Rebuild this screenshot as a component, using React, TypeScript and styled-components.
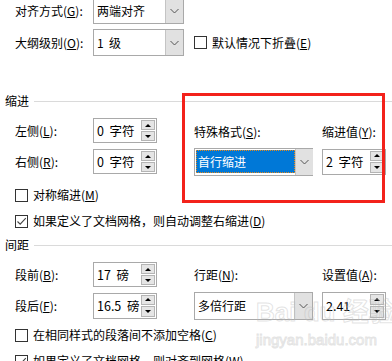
import React from 'react';
import styled, { createGlobalStyle } from 'styled-components';

const GlobalStyle = createGlobalStyle`
  html, body {
    margin: 0;
    padding: 0;
    background: #ffffff;
  }
  body {
    font-family: "Noto Sans CJK SC", "Microsoft YaHei", sans-serif;
    font-size: 12px;
    color: #000;
    overflow: hidden;
  }
`;

const Dialog = styled.div`
  position: relative;
  width: 392px;
  height: 361px;
  overflow: hidden;
  background: #fff;
`;

const Content = styled.div`
  display: flex;
  flex-direction: column;
  margin-top: -3px;
`;

const FieldRow = styled.div<{ $mt?: number }>`
  display: flex;
  align-items: center;
  height: 27px;
  padding-left: 15px;
  margin-top: ${p => p.$mt ?? 0}px;
`;

const Label = styled.span<{ $w?: number }>`
  width: ${p => (p.$w ? `${p.$w}px` : 'auto')};
  flex-shrink: 0;
  line-height: 14px;
  white-space: nowrap;
`;

const U = styled.span`
  text-decoration: underline;
  text-underline-offset: 1px;
`;

const ComboBox = styled.div<{ $w: number; $h?: number }>`
  box-sizing: border-box;
  display: flex;
  width: ${p => p.$w}px;
  height: ${p => p.$h ?? 27}px;
  border: 1px solid #a9a9a9;
  background: #fff;
`;

const ComboText = styled.div`
  flex: 1;
  display: flex;
  align-items: center;
  padding-left: 3px;
  line-height: 14px;
  white-space: pre;
`;

const Selected = styled.span`
  display: flex;
  align-items: center;
  box-sizing: border-box;
  height: 23px;
  width: 99px;
  margin-left: -2px;
  padding-left: 2px;
  background: #0078d7;
  color: #fff;
  outline: 1px dotted #e88a1a;
  outline-offset: -1px;
`;

const ComboButton = styled.div`
  width: 17px;
  flex-shrink: 0;
  display: flex;
  align-items: center;
  justify-content: center;
  background: #e1e1e1;
  border-left: 1px solid #c4c4c4;
`;

const SpinBox = styled.div<{ $h?: number }>`
  box-sizing: border-box;
  display: flex;
  width: 64px;
  height: ${p => p.$h ?? 25}px;
  border: 1px solid #a9a9a9;
  background: #fff;
`;

const SpinText = styled.div`
  flex: 1;
  display: flex;
  align-items: center;
  padding-left: 3px;
  line-height: 14px;
  white-space: pre;
  font-size: 12.5px;
`;

const SpinButtons = styled.div`
  display: flex;
  flex-direction: column;
  gap: 1px;
  padding: 1px 1px 1px 0;
`;

const SpinButton = styled.div`
  box-sizing: border-box;
  flex: 1;
  width: 14px;
  display: flex;
  align-items: center;
  justify-content: center;
  background: #e5e5e5;
  border: 1px solid #b4b4b4;
`;

const Triangle = styled.span<{ $down?: boolean }>`
  width: 0;
  height: 0;
  border-left: 3px solid transparent;
  border-right: 3px solid transparent;
  ${p => (p.$down ? 'border-top: 3px solid #000;' : 'border-bottom: 3px solid #000;')}
`;

const CheckRow = styled.div<{ $mt?: number; $pl?: number }>`
  display: flex;
  align-items: center;
  gap: 5px;
  height: 14px;
  padding-left: ${p => p.$pl ?? 15}px;
  margin-top: ${p => p.$mt ?? 0}px;
  line-height: 14px;
  white-space: nowrap;
`;

const Box = styled.span`
  box-sizing: border-box;
  width: 13px;
  height: 13px;
  flex-shrink: 0;
  border: 1px solid #333;
  background: #fff;
  display: flex;
  align-items: center;
  justify-content: center;
`;

const SectionHeader = styled.div<{ $mt: number }>`
  display: flex;
  align-items: center;
  gap: 5px;
  height: 14px;
  padding-left: 5px;
  margin-top: ${p => p.$mt}px;
  line-height: 14px;
  &::after {
    content: '';
    flex: 1;
    height: 1px;
    background: #dadada;
  }
`;

const FieldGrid = styled.div<{ $mt: number }>`
  display: grid;
  grid-template-columns: 78px 64px 37px 119px 9px 64px;
  grid-template-rows: 25px 25px;
  row-gap: 6px;
  padding-left: 15px;
  margin-top: ${p => p.$mt}px;
  align-items: center;
`;

const Cell = styled.div<{ $col: number; $row: number; $dy?: number }>`
  grid-column: ${p => p.$col};
  grid-row: ${p => p.$row};
  display: flex;
  margin-top: ${p => p.$dy ?? 0}px;
`;

const Annotation = styled.div`
  position: absolute;
  left: 182px;
  top: 93px;
  width: 203px;
  height: 110px;
  box-sizing: border-box;
  border: 3px solid #f3221b;
  pointer-events: none;
`;

const Watermark = styled.div`
  position: absolute;
  left: 256px;
  top: 296px;
  display: flex;
  flex-direction: column;
  white-space: nowrap;
  color: transparent;
  -webkit-text-stroke: 1px rgba(185, 185, 185, 0.4);
  pointer-events: none;
  font-family: "Liberation Sans", "Noto Sans CJK SC", sans-serif;
`;

const WatermarkLogo = styled.span`
  font-size: 26px;
  font-weight: 700;
  line-height: 32px;
`;

const WatermarkUrl = styled.span`
  font-size: 15px;
  line-height: 20px;
  margin-top: 2px;
`;

const Chevron = () => (
  <svg width="9" height="6" viewBox="0 0 9 6">
    <path d="M0.5 1 L4.5 5 L8.5 1" fill="none" stroke="#555" strokeWidth="1" />
  </svg>
);

const Check = () => (
  <svg width="11" height="11" viewBox="0 0 11 11">
    <path d="M1.5 5.5 L4.2 8.2 L9.8 2.2" fill="none" stroke="#444" strokeWidth="1.1" />
  </svg>
);

const Combo = ({ w, h, children }: { w: number; h?: number; children: React.ReactNode }) => (
  <ComboBox $w={w} $h={h}>
    <ComboText>{children}</ComboText>
    <ComboButton>
      <Chevron />
    </ComboButton>
  </ComboBox>
);

const Spin = ({ value, h }: { value: string; h?: number }) => (
  <SpinBox $h={h}>
    <SpinText>{value}</SpinText>
    <SpinButtons>
      <SpinButton>
        <Triangle />
      </SpinButton>
      <SpinButton>
        <Triangle $down />
      </SpinButton>
    </SpinButtons>
  </SpinBox>
);

const CheckBox = ({ checked, children, mt }: { checked?: boolean; children: React.ReactNode; mt?: number }) => (
  <CheckRow $mt={mt}>
    <Box>{checked && <Check />}</Box>
    <span>{children}</span>
  </CheckRow>
);

export default function App() {
  return (
    <>
      <GlobalStyle />
      <Dialog>
        <Content>
          <FieldRow>
            <Label $w={78}>
              对齐方式(<U>G</U>):
            </Label>
            <Combo w={91}>两端对齐</Combo>
          </FieldRow>
          <FieldRow $mt={5}>
            <Label $w={78}>
              大纲级别(<U>O</U>):
            </Label>
            <Combo w={91}>{'1  级'}</Combo>
            <CheckRow $pl={10}>
              <Box />
              <span>
                默认情况下折叠(<U>E</U>)
              </span>
            </CheckRow>
          </FieldRow>

          <SectionHeader $mt={38}>缩进</SectionHeader>
          <FieldGrid $mt={10}>
            <Cell $col={1} $row={1}>
              <Label>
                左侧(<U>L</U>):
              </Label>
            </Cell>
            <Cell $col={2} $row={1}>
              <Spin value="0  字符" />
            </Cell>
            <Cell $col={4} $row={1} $dy={3}>
              <Label>
                特殊格式(<U>S</U>):
              </Label>
            </Cell>
            <Cell $col={6} $row={1} $dy={3}>
              <Label>
                缩进值(<U>Y</U>):
              </Label>
            </Cell>
            <Cell $col={1} $row={2}>
              <Label>
                右侧(<U>R</U>):
              </Label>
            </Cell>
            <Cell $col={2} $row={2}>
              <Spin value="0  字符" />
            </Cell>
            <Cell $col={4} $row={2}>
              <ComboBox $w={119} $h={28}>
                <ComboText>
                  <Selected>首行缩进</Selected>
                </ComboText>
                <ComboButton>
                  <Chevron />
                </ComboButton>
              </ComboBox>
            </Cell>
            <Cell $col={6} $row={2}>
              <Spin value="2  字符" h={26} />
            </Cell>
          </FieldGrid>

          <CheckBox mt={14}>
            对称缩进(<U>M</U>)
          </CheckBox>
          <CheckBox checked mt={12}>
            如果定义了文档网格，则自动调整右缩进(<U>D</U>)
          </CheckBox>

          <SectionHeader $mt={10}>间距</SectionHeader>
          <FieldGrid $mt={10}>
            <Cell $col={1} $row={1}>
              <Label>
                段前(<U>B</U>):
              </Label>
            </Cell>
            <Cell $col={2} $row={1}>
              <Spin value="17  磅" />
            </Cell>
            <Cell $col={4} $row={1}>
              <Label>
                行距(<U>N</U>):
              </Label>
            </Cell>
            <Cell $col={6} $row={1}>
              <Label>
                设置值(<U>A</U>):
              </Label>
            </Cell>
            <Cell $col={1} $row={2}>
              <Label>
                段后(<U>F</U>):
              </Label>
            </Cell>
            <Cell $col={2} $row={2}>
              <Spin value="16.5  磅" h={26} />
            </Cell>
            <Cell $col={4} $row={2}>
              <Combo w={119} h={28}>
                多倍行距
              </Combo>
            </Cell>
            <Cell $col={6} $row={2}>
              <Spin value="2.41" h={28} />
            </Cell>
          </FieldGrid>

          <CheckBox mt={10}>
            在相同样式的段落间不添加空格(<U>C</U>)
          </CheckBox>
          <CheckBox checked mt={12}>
            如果定义了文档网格，则对齐到网格(<U>W</U>)
          </CheckBox>
        </Content>

        <Annotation />
        <Watermark>
          <WatermarkLogo>Bai du 经验</WatermarkLogo>
          <WatermarkUrl>jingyan.baidu.com</WatermarkUrl>
        </Watermark>
      </Dialog>
    </>
  );
}
